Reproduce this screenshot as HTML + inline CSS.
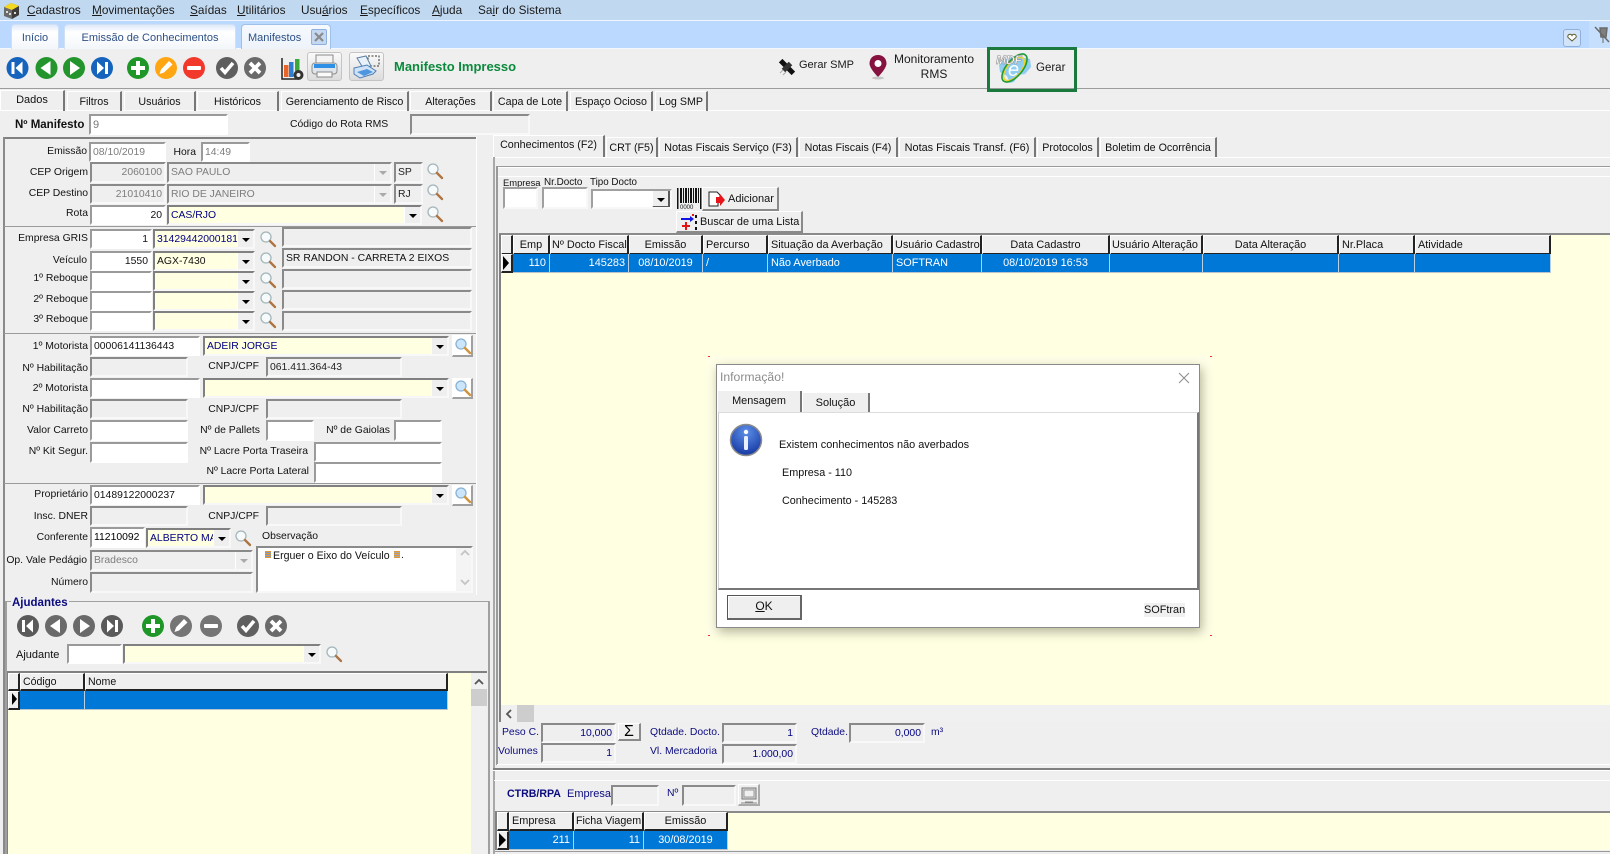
<!DOCTYPE html>
<html lang="pt"><head><meta charset="utf-8"><title>Manifestos</title>
<style>
html,body{margin:0;padding:0}
body{width:1610px;height:854px;overflow:hidden;position:relative;background:#efefef;font:10.4px/14px "Liberation Sans",sans-serif;color:#111}
div,span.a{position:absolute;box-sizing:border-box;white-space:nowrap}
.m{top:3px;font-size:11.8px;line-height:15px;color:#1a1a1a}
.m u{text-decoration:underline}
.tb{top:24px;height:25px;background:linear-gradient(#dfeafa,#fff 30%,#f3f6fa);border:1px solid #cfe0f5;border-bottom:0;border-radius:4px 4px 0 0;color:#2d4f85;font-size:11px;line-height:26px;text-align:center}
.t{height:20px;top:91px;border-top:1px solid #fff;border-left:1px solid #fff;border-right:2px solid #777;text-align:center;line-height:20px;font-size:10.7px}
.t2{height:21px;top:137px;border-top:1px solid #fff;border-left:1px solid #fff;border-right:2px solid #777;text-align:center;line-height:20px;font-size:10.7px}
.l{left:0;text-align:right;height:14px;line-height:14px;margin-top:1px}
.n{color:#0b0b80}
.i{background:#fff;border:2px solid;border-color:#9a9a9a #f6f6f6 #f6f6f6 #9a9a9a;padding:0 2px;line-height:18px;overflow:hidden}
.w{background:#fff;border:2px solid;border-color:#fff;border-top-color:#9a9a9a;border-left-color:#9a9a9a;padding:0 2px;line-height:18px;overflow:hidden}
.d{background:#efefef;border:2px solid;border-color:#8a8a8a #f8f8f8 #f8f8f8 #8a8a8a;padding:0 2px;line-height:18px;color:#7d7d7d;overflow:hidden}
.r{text-align:right}
.y{background:#ffffe2;border:2px solid;border-color:#808080 #f8f8f8 #f8f8f8 #808080;padding:0 2px;line-height:18px;color:#000080;overflow:hidden}
.b{width:18px;height:20px;top:0;right:0;background:#efefef;border:1px solid;border-color:#fff #5a5a5a #5a5a5a #fff;border-width:1px 2px 2px 1px}
.b:after{content:"";position:absolute;left:4px;top:7px;border:4px solid transparent;border-top:4px solid #000;border-bottom:0}
.b.o:after{border-top-color:#aaa}
.h{top:235px;height:20px;background:#efefef;border-top:1px solid #fff;border-left:1px solid #fff;border-right:2px solid #222;border-bottom:2px solid #222;padding:0 2px;line-height:18px;font-size:10.9px;overflow:hidden}
.c{background:#0078d7;color:#fff;border-right:1px solid #b8cfe4;border-bottom:1px solid #b8c4cc;height:19px;line-height:19px;padding:0 3px;font-size:10.9px}
.btn{background:#efefef;border:1px solid;border-color:#fff #8a8a8a #8a8a8a #fff;border-width:1px 2px 2px 1px}
.bw{background:#fff;border:1px solid;border-color:#fff #a0a0a0 #a0a0a0 #fff;border-width:1px 2px 2px 1px}
.tool{background:linear-gradient(#fafafa,#dcdcdc);border:1px solid #c4c4c4;border-radius:3px}
</style></head>
<body>
<svg width="0" height="0" style="position:absolute">
<defs>
<g id="cf"><circle r="11"/><path fill="#fff" d="M-6-6h3v12h-3zM-2 0 5-6.5V6.5Z"/></g>
<g id="cp"><circle r="11"/><path fill="#fff" d="M4-7V7L-6 0Z"/></g>
<g id="cn"><circle r="11"/><path fill="#fff" d="M-4-7V7L6 0Z"/></g>
<g id="cl"><circle r="11"/><path fill="#fff" d="M6-6H3V6H6ZM2 0-5-6.5V6.5Z"/></g>
<g id="ca"><circle r="11"/><path fill="#fff" d="M-2-7h4v5h5v4h-5v5h-4v-5h-5v-4h5z"/></g>
<g id="ce"><circle r="11"/><path fill="#fff" d="M3-7 6.500-3.500-2 4.500-6.500 6-5 1.500Z"/></g>
<g id="cm"><circle r="11"/><rect x="-7" y="-2" width="14" height="4" rx="1" fill="#fff"/></g>
<g id="cc"><circle r="11"/><path fill="none" stroke="#fff" stroke-width="3.500" d="M-6 0-2 4.500 6-5"/></g>
<g id="cx"><circle r="11"/><path fill="none" stroke="#fff" stroke-width="3.800" d="M-5-5 5 5M5-5-5 5"/></g>
<g id="mag"><circle cx="6" cy="6" r="5" fill="#f6fafb" stroke="#a4b6ba" stroke-width="1.300"/><path d="M10 10l5 5" stroke="#ad7442" stroke-width="2.300" stroke-linecap="round"/></g>
<g id="magb"><circle cx="6" cy="6" r="5" fill="#cbe6fa" stroke="#8ab2d6" stroke-width="1.300"/><path d="M10 10l5 5" stroke="#cf9440" stroke-width="2.500" stroke-linecap="round"/></g>
</defs>
</svg>

<!-- menu -->
<div style="left:0;top:0;width:1610px;height:20px;background:#c1d9f0"></div>
<div style="left:0;top:20px;width:1610px;height:29px;background:#bbd9fe;border-top:1px solid #eef5ff;border-bottom:1px solid #f4f8ff"></div>
<div style="left:1589px;top:21px;width:21px;height:27px;background:#c6dffc"></div>
<div class="m" style="left:27px"><u>C</u>adastros</div>
<div class="m" style="left:92px"><u>M</u>ovimentações</div>
<div class="m" style="left:190px"><u>S</u>aídas</div>
<div class="m" style="left:237px"><u>U</u>tilitários</div>
<div class="m" style="left:301px">Usu<u>á</u>rios</div>
<div class="m" style="left:360px"><u>E</u>specíficos</div>
<div class="m" style="left:432px"><u>A</u>juda</div>
<div class="m" style="left:478px">Sa<u>i</u>r do Sistema</div>

<div class="tb" style="left:11px;width:48px">Início</div>
<div class="tb" style="left:64px;width:172px">Emissão de Conhecimentos</div>
<div class="tb" style="left:241px;width:90px;background:linear-gradient(#f6faff,#eef3fa);border-color:#9fc0e8;text-align:left;padding-left:6px">Manifestos</div>
<div style="left:311px;top:29px;width:16px;height:16px;background:#c4d8f2;border:1px solid #8fb0dc;border-radius:2px"></div>
<div style="left:1563px;top:29px;width:18px;height:18px;background:#d2e4fa;border:1px solid #8fb0dc;border-radius:3px"></div>

<!-- toolbar and lines -->
<div style="left:0;top:88px;width:1610px;height:1px;background:#9c9c9c"></div>
<div style="left:0;top:110px;width:1610px;height:1px;background:#fff"></div>

<div class="tool" style="left:307px;top:52px;width:35px;height:29px"></div>
<div class="tool" style="left:349px;top:52px;width:35px;height:29px"></div>
<div style="left:394px;top:59px;font:bold 13px/16px 'Liberation Sans',sans-serif;color:#0b8a3c">Manifesto Impresso</div>

<div style="left:799px;top:58px;font-size:11px;line-height:15px;color:#1a1a1a">Gerar SMP</div>
<div style="left:884px;top:52px;width:100px;text-align:center;font-size:12px;line-height:15px;color:#1a1a1a">Monitoramento<br>RMS</div>
<div style="left:987px;top:47px;width:90px;height:45px;border:3px solid #1a7a3e"></div>
<div style="left:1036px;top:61px;font-size:11.5px;line-height:15px;color:#1a1a1a">Gerar</div>

<!-- tabs row 1 -->
<div class="t" style="left:0;top:90px;width:65px;height:21px;line-height:18px;font-size:11px">Dados</div>
<div class="t" style="left:67px;width:55px">Filtros</div>
<div class="t" style="left:124px;width:72px">Usuários</div>
<div class="t" style="left:197px;width:82px">Históricos</div>
<div class="t" style="left:281px;width:128px">Gerenciamento de Risco</div>
<div class="t" style="left:410px;width:82px">Alterações</div>
<div class="t" style="left:493px;width:75px">Capa de Lote</div>
<div class="t" style="left:570px;width:83px">Espaço Ocioso</div>
<div class="t" style="left:655px;width:53px">Log SMP</div>

<div class="l" style="left:15px;top:117px;font-weight:bold;text-align:left;font-size:11.5px">Nº Manifesto</div>
<div class="w" style="left:89px;top:114px;width:139px;height:21px;color:#777;font-size:11px">9</div>
<div class="l" style="left:290px;top:117px;text-align:left">Código do Rota RMS</div>
<div class="d" style="left:410px;top:114px;width:120px;height:21px"></div>

<!-- left panel -->
<div style="left:3px;top:137px;width:473px;height:2px;background:#808080"></div>
<div style="left:3px;top:137px;width:2px;height:717px;background:#8a8a8a"></div>
<div style="left:476px;top:137px;width:1px;height:458px;background:#fff"></div>
<div style="left:4px;top:226px;width:472px;height:1px;background:#9a9a9a"></div>
<div style="left:4px;top:333px;width:472px;height:1px;background:#9a9a9a"></div>
<div style="left:4px;top:483px;width:472px;height:1px;background:#9a9a9a"></div>

<div class="l" style="width:87px;top:144px">Emissão</div>
<div class="w" style="left:89px;top:142px;width:77px;height:20px;color:#7d7d7d">08/10/2019</div>
<div class="l" style="width:196px;top:145px">Hora</div>
<div class="w" style="left:201px;top:142px;width:49px;height:20px;color:#7d7d7d">14:49</div>

<div class="l" style="width:88px;top:165px">CEP Origem</div>
<div class="d r" style="left:90px;top:162px;width:76px;height:21px">2060100</div>
<div class="d" style="left:167px;top:162px;width:225px;height:21px">SAO PAULO<div class="b o" style="top:-1px;right:-2px;height:21px"></div></div>
<div class="d" style="left:394px;top:162px;width:29px;height:21px;color:#222">SP</div>

<div class="l" style="width:88px;top:186px">CEP Destino</div>
<div class="d r" style="left:90px;top:184px;width:76px;height:20px">21010410</div>
<div class="d" style="left:167px;top:184px;width:225px;height:20px">RIO DE JANEIRO<div class="b o" style="top:-1px;right:-2px;height:20px"></div></div>
<div class="d" style="left:394px;top:184px;width:29px;height:20px;color:#222">RJ</div>

<div class="l" style="width:88px;top:206px">Rota</div>
<div class="w r" style="left:90px;top:205px;width:76px;height:20px">20</div>
<div class="y" style="left:167px;top:205px;width:255px;height:20px">CAS/RJO<div class="b" style="top:-1px;right:-2px;height:20px"></div></div>

<div class="l" style="width:88px;top:231px">Empresa GRIS</div>
<div class="w r" style="left:90px;top:229px;width:62px;height:20px">1</div>
<div class="y" style="left:153px;top:229px;width:102px;height:20px">31429442000181<div class="b" style="top:-1px;right:-2px;height:20px"></div></div>
<div class="d" style="left:282px;top:227px;width:190px;height:20px"></div>

<div class="l" style="width:87px;top:253px">Veículo</div>
<div class="w r" style="left:90px;top:251px;width:62px;height:20px">1550</div>
<div class="y" style="left:153px;top:251px;width:102px;height:20px;color:#111">AGX-7430<div class="b" style="top:-1px;right:-2px;height:20px"></div></div>
<div class="d" style="left:282px;top:248px;width:190px;height:20px;color:#111">SR RANDON - CARRETA 2 EIXOS</div>

<div class="l" style="width:88px;top:271px">1º Reboque</div>
<div class="w" style="left:90px;top:271px;width:62px;height:20px"></div>
<div class="y" style="left:153px;top:271px;width:102px;height:20px"><div class="b" style="top:-1px;right:-2px;height:20px"></div></div>
<div class="d" style="left:282px;top:269px;width:190px;height:20px"></div>

<div class="l" style="width:88px;top:292px">2º Reboque</div>
<div class="w" style="left:90px;top:291px;width:62px;height:20px"></div>
<div class="y" style="left:153px;top:291px;width:102px;height:20px"><div class="b" style="top:-1px;right:-2px;height:20px"></div></div>
<div class="d" style="left:282px;top:290px;width:190px;height:20px"></div>

<div class="l" style="width:88px;top:312px">3º Reboque</div>
<div class="w" style="left:90px;top:311px;width:62px;height:20px"></div>
<div class="y" style="left:153px;top:311px;width:102px;height:20px"><div class="b" style="top:-1px;right:-2px;height:20px"></div></div>
<div class="d" style="left:282px;top:311px;width:190px;height:20px"></div>

<div class="l" style="width:88px;top:339px">1º Motorista</div>
<div class="w" style="left:90px;top:336px;width:110px;height:20px">00006141136443</div>
<div class="y" style="left:203px;top:336px;width:246px;height:20px">ADEIR JORGE<div class="b" style="top:-1px;right:-2px;height:20px"></div></div>
<div class="bw" style="left:452px;top:335px;width:21px;height:22px"></div>

<div class="l" style="width:88px;top:361px">Nº Habilitação</div>
<div class="d" style="left:90px;top:357px;width:98px;height:20px"></div>
<div class="l" style="width:259px;top:359px">CNPJ/CPF</div>
<div class="d" style="left:266px;top:357px;width:136px;height:20px;color:#222">061.411.364-43</div>

<div class="l" style="width:88px;top:381px">2º Motorista</div>
<div class="w" style="left:90px;top:378px;width:110px;height:20px"></div>
<div class="y" style="left:203px;top:378px;width:246px;height:20px"><div class="b" style="top:-1px;right:-2px;height:20px"></div></div>
<div class="bw" style="left:452px;top:378px;width:21px;height:21px"></div>

<div class="l" style="width:88px;top:402px">Nº Habilitação</div>
<div class="d" style="left:90px;top:399px;width:98px;height:20px"></div>
<div class="l" style="width:259px;top:402px">CNPJ/CPF</div>
<div class="d" style="left:266px;top:399px;width:136px;height:20px"></div>

<div class="l" style="width:88px;top:423px">Valor Carreto</div>
<div class="w" style="left:90px;top:420px;width:98px;height:21px"></div>
<div class="l" style="width:260px;top:423px">Nº de Pallets</div>
<div class="w" style="left:266px;top:420px;width:48px;height:21px"></div>
<div class="l" style="width:390px;top:423px">Nº de Gaiolas</div>
<div class="w" style="left:394px;top:420px;width:48px;height:21px"></div>

<div class="l" style="width:88px;top:444px">Nº Kit Segur.</div>
<div class="w" style="left:90px;top:442px;width:98px;height:21px"></div>
<div class="l" style="width:308px;top:444px">Nº Lacre Porta Traseira</div>
<div class="w" style="left:314px;top:442px;width:128px;height:20px"></div>
<div class="l" style="width:309px;top:464px">Nº Lacre Porta Lateral</div>
<div class="w" style="left:314px;top:462px;width:128px;height:21px"></div>

<div class="l" style="width:88px;top:487px">Proprietário</div>
<div class="w" style="left:90px;top:485px;width:110px;height:20px">01489122000237</div>
<div class="y" style="left:203px;top:485px;width:246px;height:20px"><div class="b" style="top:-1px;right:-2px;height:20px"></div></div>
<div class="bw" style="left:452px;top:485px;width:21px;height:21px"></div>

<div class="l" style="width:88px;top:509px">Insc. DNER</div>
<div class="d" style="left:90px;top:506px;width:98px;height:20px"></div>
<div class="l" style="width:259px;top:509px">CNPJ/CPF</div>
<div class="d" style="left:266px;top:506px;width:136px;height:20px"></div>

<div class="l" style="width:88px;top:530px">Conferente</div>
<div class="w" style="left:90px;top:527px;width:55px;height:21px;color:#000">11210092</div>
<div class="y" style="left:146px;top:528px;width:85px;height:20px">ALBERTO MA<div class="b" style="top:-1px;right:-2px;height:20px"></div></div>
<div class="l" style="left:262px;top:529px;text-align:left">Observação</div>

<div class="l" style="width:87px;top:553px">Op. Vale Pedágio</div>
<div class="d" style="left:90px;top:550px;width:163px;height:21px;line-height:18px">Bradesco<div class="b o" style="top:-1px;right:-2px;height:21px"></div></div>
<div class="l" style="width:88px;top:575px">Número</div>
<div class="d" style="left:90px;top:572px;width:163px;height:21px"></div>

<div class="i" style="left:256px;top:546px;width:217px;height:47px;border-color:#8a8a8a #f8f8f8 #f8f8f8 #8a8a8a"></div>
<div style="left:273px;top:549px;font-size:10.6px">Erguer o Eixo do Veículo</div>
<div style="left:265px;top:551px;width:6px;height:7px;background:repeating-linear-gradient(#e49a30 0 1px,#7f96c0 1px 2px)"></div>
<div style="left:394px;top:551px;width:6px;height:7px;background:repeating-linear-gradient(#e49a30 0 1px,#a8a8a8 1px 2px)"></div>
<div style="left:401px;top:549px">.</div>
<div style="left:456px;top:548px;width:15px;height:43px;background:#f4f4f4"></div>

<!-- Ajudantes -->
<div style="left:5px;top:601px;width:485px;height:253px;border:2px solid #a0a0a0;border-bottom:0;border-top-width:1px"></div>
<div class="n" style="left:11px;top:596px;background:#efefef;padding:0 1px;font:bold 11.5px/14px 'Liberation Sans',sans-serif">Ajudantes</div>
<div class="l" style="left:16px;top:647px;text-align:left;font-size:11px">Ajudante</div>
<div class="w" style="left:67px;top:644px;width:55px;height:20px"></div>
<div class="y" style="left:123px;top:644px;width:198px;height:20px"><div class="b" style="top:-1px;right:-2px;height:20px"></div></div>
<div style="left:7px;top:671px;width:480px;height:183px;background:#ffffe2;border-top:2px solid #808080"></div>
<div style="left:7px;top:671px;width:1px;height:183px;background:#808080"></div>
<div class="h" style="left:8px;top:673px;width:12px;height:18px"></div>
<div class="h" style="left:20px;top:673px;width:65px;height:18px;line-height:16px;font-size:10.6px">Código</div>
<div class="h" style="left:85px;top:673px;width:363px;height:18px;line-height:16px;font-size:10.6px">Nome</div>
<div class="h" style="left:8px;top:691px;width:12px;height:19px;border-right:2px solid #222"></div>
<div class="c" style="left:20px;top:691px;width:65px"></div>
<div class="c" style="left:85px;top:691px;width:363px"></div>
<div style="left:471px;top:673px;width:16px;height:181px;background:#f0f0f0"></div>
<div style="left:471px;top:689px;width:16px;height:17px;background:#cdcdcd"></div>

<!-- right panel -->
<div class="t2" style="left:493px;width:112px;top:135px;line-height:19px;height:23px">Conhecimentos (F2)</div>
<div class="t2" style="left:606px;width:52px">CRT (F5)</div>
<div class="t2" style="left:659px;width:139px;font-size:10.9px">Notas Fiscais Serviço (F3)</div>
<div class="t2" style="left:799px;width:99px">Notas Fiscais (F4)</div>
<div class="t2" style="left:899px;width:137px;font-size:10.9px">Notas Fiscais Transf. (F6)</div>
<div class="t2" style="left:1037px;width:62px">Protocolos</div>
<div class="t2" style="left:1100px;width:117px">Boletim de Ocorrência</div>
<div style="left:492px;top:157px;width:1118px;height:1px;background:#fff"></div>
<div style="left:493px;top:157px;width:2px;height:697px;background:#a8a8a8"></div>
<div style="left:496px;top:166px;width:1114px;height:1px;background:#9a9a9a"></div>
<div style="left:497px;top:167px;width:1113px;height:1px;background:#fff"></div>
<div style="left:496px;top:176px;width:1114px;height:1px;background:#fff"></div>
<div style="left:496px;top:166px;width:2px;height:599px;background:#9a9a9a"></div>

<div style="left:503px;top:176px;font-size:9.4px">Empresa</div>
<div style="left:544px;top:176px;font-size:9.9px">Nr.Docto</div>
<div style="left:590px;top:176px;font-size:9.8px">Tipo Docto</div>
<div class="w" style="left:503px;top:187px;width:35px;height:22px;border-color:#a0a0a0 #f8f8f8 #f8f8f8 #a0a0a0"></div>
<div class="w" style="left:542px;top:187px;width:46px;height:22px;border-color:#a0a0a0 #f8f8f8 #f8f8f8 #a0a0a0"></div>
<div class="w" style="left:591px;top:189px;width:81px;height:20px;border-color:#a0a0a0 #f8f8f8 #f8f8f8 #a0a0a0"><div class="b" style="top:-1px;right:0;height:18px"></div></div>
<div class="btn" style="left:702px;top:187px;width:77px;height:24px"></div>
<div style="left:728px;top:192px;font-size:11px">Adicionar</div>
<div class="btn" style="left:676px;top:211px;width:127px;height:22px"></div>
<div style="left:700px;top:215px;font-size:10.9px">Buscar de uma Lista</div>

<!-- main grid -->
<div style="left:499px;top:233px;width:1111px;height:472px;background:#ffffe2;border-top:2px solid #8a8a8a;border-left:2px solid #808080"></div>
<div class="h" style="left:501px;width:12px"></div>
<div class="h" style="left:513px;width:37px;text-align:center">Emp</div>
<div class="h" style="left:550px;width:79px;padding:0 1px">Nº Docto Fiscal</div>
<div class="h" style="left:629px;width:74px;text-align:center">Emissão</div>
<div class="h" style="left:703px;width:65px">Percurso</div>
<div class="h" style="left:768px;width:125px">Situação da Averbação</div>
<div class="h" style="left:893px;width:89px;padding:0 1px">Usuário Cadastro</div>
<div class="h" style="left:982px;width:128px;text-align:center">Data Cadastro</div>
<div class="h" style="left:1110px;width:93px;padding:0 1px">Usuário Alteração</div>
<div class="h" style="left:1203px;width:136px;text-align:center">Data Alteração</div>
<div class="h" style="left:1339px;width:76px">Nr.Placa</div>
<div class="h" style="left:1415px;width:136px">Atividade</div>
<div class="h" style="left:501px;top:254px;width:12px;height:19px"></div>
<div class="c r" style="left:513px;top:254px;width:37px">110</div>
<div class="c r" style="left:550px;top:254px;width:79px">145283</div>
<div class="c" style="left:629px;top:254px;width:74px;text-align:center">08/10/2019</div>
<div class="c" style="left:703px;top:254px;width:65px">/</div>
<div class="c" style="left:768px;top:254px;width:125px">Não Averbado</div>
<div class="c" style="left:893px;top:254px;width:89px">SOFTRAN</div>
<div class="c" style="left:982px;top:254px;width:128px;text-align:center">08/10/2019 16:53</div>
<div class="c" style="left:1110px;top:254px;width:93px"></div>
<div class="c" style="left:1203px;top:254px;width:136px"></div>
<div class="c" style="left:1339px;top:254px;width:76px"></div>
<div class="c" style="left:1415px;top:254px;width:136px"></div>
<div style="left:499px;top:705px;width:1111px;height:17px;background:#f0f0f0;border-left:2px solid #808080"></div>
<div style="left:517px;top:705px;width:17px;height:17px;background:#cdcdcd"></div>

<div class="l n" style="left:502px;top:725px;text-align:left">Peso C.</div>
<div class="d r" style="left:541px;top:723px;width:75px;height:20px;color:#000080">10,000</div>
<div class="btn" style="left:618px;top:723px;width:23px;height:18px;font-size:16px;line-height:15px;text-align:center;color:#000">Σ</div>
<div class="l n" style="left:650px;top:725px;text-align:left">Qtdade. Docto.</div>
<div class="d r" style="left:722px;top:723px;width:75px;height:20px;color:#000080">1</div>
<div class="l n" style="left:811px;top:725px;text-align:left">Qtdade.</div>
<div class="d r" style="left:849px;top:723px;width:76px;height:20px;color:#000080">0,000</div>
<div class="l n" style="left:931px;top:725px;text-align:left">m³</div>
<div class="l n" style="left:498px;top:744px;text-align:left">Volumes</div>
<div class="d r" style="left:541px;top:743px;width:75px;height:20px;color:#000080">1</div>
<div class="l n" style="left:650px;top:744px;text-align:left">Vl. Mercadoria</div>
<div class="d r" style="left:722px;top:744px;width:75px;height:20px;color:#000080">1.000,00</div>

<div style="left:497px;top:764px;width:1113px;height:1px;background:#fff"></div>
<div style="left:493px;top:768px;width:1117px;height:2px;background:#808080"></div>
<div style="left:493px;top:770px;width:1117px;height:1px;background:#fff"></div>
<div style="left:494px;top:780px;width:1116px;height:1px;background:#fff"></div>

<div class="n" style="left:507px;top:787px;font-weight:bold;font-size:10.6px">CTRB/RPA</div>
<div class="n" style="left:567px;top:787px;font-size:11px">Empresa</div>
<div class="d" style="left:611px;top:785px;width:48px;height:21px"></div>
<div class="n" style="left:667px;top:787px">Nº</div>
<div class="d" style="left:682px;top:785px;width:54px;height:21px"></div>
<div class="btn" style="left:738px;top:784px;width:22px;height:22px;border-color:#fff #aaa #aaa #fff"></div>

<div style="left:495px;top:811px;width:1115px;height:39px;background:#ffffe2;border-top:2px solid #8a8a8a;border-left:2px solid #808080"></div>
<div class="h" style="left:497px;top:812px;width:12px;height:19px"></div>
<div class="h" style="left:509px;top:812px;width:65px;height:19px;line-height:17px">Empresa</div>
<div class="h" style="left:574px;top:812px;width:70px;height:19px;line-height:17px;font-size:10.7px;padding:0 1px">Ficha Viagem</div>
<div class="h" style="left:644px;top:812px;width:84px;height:19px;line-height:17px;text-align:center">Emissão</div>
<div class="h" style="left:497px;top:831px;width:12px;height:19px"></div>
<div class="c r" style="left:509px;top:831px;width:65px">211</div>
<div class="c r" style="left:574px;top:831px;width:70px">11</div>
<div class="c" style="left:644px;top:831px;width:84px;text-align:center">30/08/2019</div>
<div style="left:495px;top:851px;width:1115px;height:1px;background:#9a9a9a"></div>

<!-- icons -->
<svg style="position:absolute;left:0;top:0" width="1610" height="854">
<!-- app logo -->
<path d="M4 7l7-4 8 3v9l-7 4-8-3z" fill="#6a6a6a"/><path d="M4 7l7-4 8 3-7 4z" fill="#f4d820"/><path d="M12 10v9l7-4V6z" fill="#3c3c3c"/><path d="M6 11h2v2H6zM9 13h2v2H9zM14 12h2v2h-2z" fill="#ddd"/>
<use href="#cf" x="17.500" y="68" fill="#1563bd"/><use href="#cp" x="46.500" y="68" fill="#23952c"/><use href="#cn" x="74" y="68" fill="#23952c"/><use href="#cl" x="102" y="68" fill="#1563bd"/>
<use href="#ca" x="138" y="68" fill="#1f9628"/><use href="#ce" x="166" y="68" fill="#ffa612"/><use href="#cm" x="194" y="68" fill="#f1382b"/>
<use href="#cc" x="227" y="68" fill="#5e5e5e"/><use href="#cx" x="255" y="68" fill="#6a6a6a"/>
<!-- chart -->
<path d="M282 58V79H298" fill="none" stroke="#222" stroke-width="1.500"/>
<rect x="284" y="65" width="4.500" height="12" fill="#e8642a"/><rect x="289" y="62" width="4.500" height="15" fill="#2f7fd0"/><rect x="295" y="59" width="4.500" height="12" fill="#3aa83a"/>
<circle cx="298.500" cy="75" r="5" fill="#333"/><circle cx="298.500" cy="75" r="2" fill="#efefef"/>
<!-- printers -->
<rect x="316" y="55" width="17" height="9" fill="#f4f4f4" stroke="#8a8a8a"/><rect x="312" y="63" width="25" height="11" rx="3" fill="#dfe5ea" stroke="#8d8d8d"/><rect x="314" y="64" width="21" height="4" fill="#2e8fe6"/><rect x="317" y="72" width="15" height="5" fill="#fafafa" stroke="#8a8a8a"/>
<rect x="368" y="56" width="11" height="10" fill="none" stroke="#333" stroke-dasharray="2 1.500"/>
<path d="M357 58l9-2 5 10-8 2z" fill="#e8f2fb" stroke="#5d7fa5"/><path d="M354 68l13-3 9 6-3 3-13 4-6-4z" fill="#cfe2f6" stroke="#4f7fb5"/><path d="M357 72l10-3 6 3-9 4z" fill="#4e97de"/>
<!-- satellite, pin -->
<g transform="translate(787 67) rotate(45)"><rect x="-9" y="-2.500" width="18" height="5" fill="#111"/><rect x="-2.500" y="-5" width="5" height="10" fill="#333"/></g>
<path d="M783 70l-3 3M786 72l-3 3" stroke="#aaa" stroke-width="1"/>
<path d="M878 55c-5 0-8.500 3.500-8.500 8.500 0 5 8.500 13.500 8.500 13.500s8.500-8.500 8.500-13.500c0-5-3.500-8.500-8.500-8.500z" fill="#85123f"/><circle cx="878" cy="63.500" r="3.500" fill="#fff"/><ellipse cx="878" cy="78" rx="6" ry="1.500" fill="#c6c6c6"/>
<!-- MDFe -->
<path d="M1006 59l10-3 14 3 1 8-6 7-7 1-4 7-4 1-3-7-7-4-1-7z" fill="#8fcdf1"/>
<ellipse cx="1014" cy="69" rx="7" ry="14" transform="rotate(40 1014 69)" fill="none" stroke="#f0d227" stroke-width="1.500"/>
<ellipse cx="1014.500" cy="68" rx="8" ry="17" transform="rotate(40 1014.500 68)" fill="none" stroke="#1f9a3a" stroke-width="1.600"/>
<text x="996" y="64" font-family="Liberation Sans" font-size="12" font-weight="bold" font-style="italic" fill="#fff" stroke="#909090" stroke-width=".6">MDF</text>
<text x="1008" y="76" font-family="Liberation Sans" font-size="20" font-style="italic" fill="#fff">e</text>
<!-- tab close, heart, pin -->
<path d="M315 33l8 8M323 33l-8 8" stroke="#8a8a8a" stroke-width="2.200"/>
<path d="M1572 41l-4-3.500a2 2 0 0 1 4-2 2 2 0 0 1 4 2z" fill="#fff" stroke="#5c5c30"/>
<path d="M1595 27l14 15M1600 28h7l-1 9h-5z" stroke="#6a6a6a" stroke-width="1.500" fill="#7f7f7f"/>
<path d="M1603 37v6" stroke="#6a6a6a"/>
<!-- magnifiers -->
<use href="#mag" x="427" y="163"/><use href="#mag" x="427" y="184"/><use href="#mag" x="427" y="206"/>
<use href="#mag" x="260" y="231"/><use href="#mag" x="260" y="252"/><use href="#mag" x="260" y="272"/><use href="#mag" x="260" y="292"/><use href="#mag" x="260" y="312"/>
<use href="#magb" x="455" y="338"/><use href="#magb" x="455" y="380"/><use href="#magb" x="455" y="487"/>
<use href="#mag" x="235" y="530"/><use href="#mag" x="326" y="646"/>
<!-- ajudantes icons -->
<use href="#cf" x="28" y="626" fill="#5a5a5a"/><use href="#cp" x="56" y="626" fill="#6a6a6a"/><use href="#cn" x="84" y="626" fill="#6a6a6a"/><use href="#cl" x="112" y="626" fill="#5a5a5a"/>
<use href="#ca" x="153" y="626" fill="#1f9628"/><use href="#ce" x="181" y="626" fill="#757575"/><use href="#cm" x="211" y="626" fill="#757575"/><use href="#cc" x="248" y="626" fill="#606060"/><use href="#cx" x="276" y="626" fill="#6a6a6a"/>
<!-- grid indicators and scroll arrows -->
<path d="M12 693l5 6-5 6zM503 256l6 7-6 7zM499 833l7 7-7 7z" fill="#000"/>
<path d="M475 684l4-4 4 4" fill="none" stroke="#555" stroke-width="1.800"/>
<path d="M461 555l4-4 4 4M461 580l4 4 4-4" fill="none" stroke="#c4c4c4" stroke-width="1.800"/>
<path d="M511 710l-4 4 4 4" fill="none" stroke="#555" stroke-width="1.800"/>
<!-- barcode -->
<g fill="#111"><rect x="677" y="188" width="1.500" height="21"/><rect x="680" y="188" width="2" height="15"/><rect x="683" y="188" width="1" height="15"/><rect x="685" y="188" width="2" height="15"/><rect x="688" y="188" width="1" height="15"/><rect x="690" y="188" width="2" height="15"/><rect x="693" y="188" width="1" height="15"/><rect x="695" y="188" width="2" height="15"/><rect x="698" y="188" width="1" height="15"/><rect x="700" y="188" width="1.500" height="21"/></g>
<text x="680" y="209" font-family="Liberation Sans" font-size="6" fill="#111">0000</text>
<!-- Adicionar / Buscar -->
<path d="M709 192h8l3 3v3h-2v8h-9z" fill="#fff" stroke="#222"/><path d="M716 197h4v-3l5 6-5 6v-3h-4z" fill="#e8141c"/>
<path d="M681 218h9v-2l4 3-4 3v-2h-9z" fill="#1414e0"/><path d="M682 225h3v-3h2v3h3v2h-3v3h-2v-3h-3z" fill="#e01414"/>
<path d="M695 215h2v3h-2zM695 221h2v3h-2zM695 227h2v3h-2z" fill="#111"/><rect x="692" y="214" width="2" height="2" fill="#e01414"/>
<!-- monitor -->
<rect x="742" y="788" width="14" height="11" fill="#d8d8d8" stroke="#777"/><rect x="744" y="790" width="10" height="7" fill="#efefef" stroke="#999"/><path d="M745 802h8M741 803h16" stroke="#888"/>
</svg>

<!-- dialog -->
<div style="left:708px;top:356px;width:503px;height:279px;background:#ffffe8"></div>
<div style="left:708px;top:356px;width:2px;height:1px;background:#e33"></div><div style="left:1210px;top:356px;width:2px;height:1px;background:#e33"></div>
<div style="left:708px;top:635px;width:2px;height:1px;background:#e33"></div><div style="left:1210px;top:635px;width:2px;height:1px;background:#e33"></div>
<div style="left:716px;top:364px;width:484px;height:264px;background:#fff;border:1px solid #8a8a8a;box-shadow:2px 4px 10px rgba(90,90,50,.45)">
  <div style="left:3px;top:4px;font-size:12.2px;line-height:17px;color:#8c8c8c">Informação!</div>
  <svg style="position:absolute;left:461px;top:7px" width="12" height="12"><path d="M1 1l10 10M11 1L1 11" stroke="#8a8a8a"/></svg>
  <div style="left:1px;top:26px;width:84px;height:21px;background:#efefef;border-right:2px solid #777;text-align:center;font-size:10.9px;line-height:20px">Mensagem</div>
  <div style="left:86px;top:28px;width:67px;height:19px;background:#efefef;border-right:2px solid #777;text-align:center;font-size:11px;line-height:20px">Solução</div>
  <div style="left:1px;top:47px;width:481px;height:178px;background:#fff;border-top:1px solid #dcdcdc;border-right:2px solid #777;border-bottom:2px solid #777;border-left:1px solid #d0d0d0"></div>
  <svg style="position:absolute;left:12px;top:58px" width="34" height="34">
    <defs><radialGradient id="ig" cx=".5" cy=".25" r=".8"><stop offset="0" stop-color="#5d8fe8"/><stop offset="1" stop-color="#10339f"/></radialGradient></defs>
    <circle cx="17" cy="17" r="15.500" fill="url(#ig)" stroke="#8a8a8a" stroke-width="1.500"/>
    <circle cx="17" cy="9" r="2.200" fill="#fff"/><rect x="15" y="13" width="4" height="14" rx="1.500" fill="#e8f0ff"/>
  </svg>
  <div style="left:62px;top:73px;font-size:10.9px">Existem conhecimentos não averbados</div>
  <div style="left:65px;top:101px;font-size:10.8px">Empresa - 110</div>
  <div style="left:65px;top:129px;font-size:10.8px">Conhecimento - 145283</div>
  <div style="left:10px;top:230px;width:75px;height:25px;background:#efefef;border:1px solid #555;border-right:2px solid #666;border-bottom:2px solid #666;box-shadow:inset 1px 1px 0 #fff;text-align:center;font-size:12px;line-height:20px"><u>O</u>K</div>
  <div style="left:427px;top:238px;background:#f0f0f0;font-size:10.9px">SOFtran</div>
</div>
</body></html>
